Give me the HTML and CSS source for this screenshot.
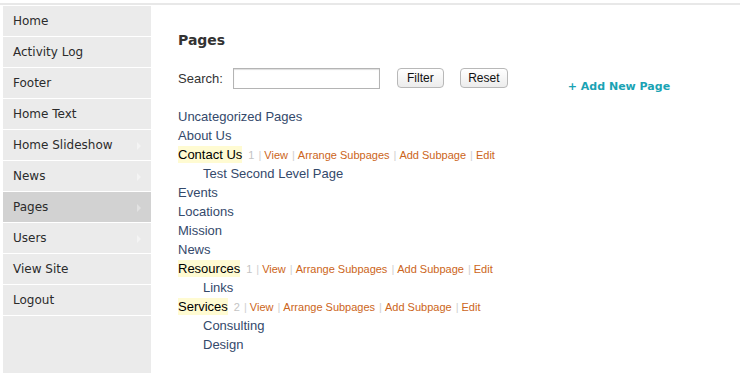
FILE: index.html
```html
<html>

<head>
	<meta charset="utf-8">
	<meta name="viewport" content="width=device-width, initial-scale=1">
	<title>Pages</title>
	<link rel="stylesheet" href="styles.css">
</head>

<body>
	<div class="top-bar"></div>
	<div class="layout">
		<ul class="sidebar">
			<li><a href="#">Home</a></li>
			<li><a href="#">Activity Log</a></li>
			<li><a href="#">Footer</a></li>
			<li><a href="#">Home Text</a></li>
			<li class="has-sub"><a href="#">Home Slideshow</a></li>
			<li class="has-sub"><a href="#">News</a></li>
			<li class="has-sub active"><a href="#">Pages</a></li>
			<li class="has-sub"><a href="#">Users</a></li>
			<li><a href="#">View Site</a></li>
			<li><a href="#">Logout</a></li>
		</ul>

		<div class="main">
			<h2 class="title">Pages</h2>

			<form class="search-row" onsubmit="return false;">
				<label for="search">Search:</label>
				<input type="text" id="search" class="search-input">
				<button class="btn btn-filter">Filter</button>
				<button class="btn btn-reset" type="reset">Reset</button>
				<a href="#" class="add-new">+ Add New Page</a>
			</form>

			<ul class="page-list">
				<li><a href="#">Uncategorized Pages</a></li>
				<li><a href="#">About Us</a></li>
				<li>
					<div class="row"><span class="parent">Contact Us</span><span class="count">1</span><span class="sep">|</span><a class="action" href="#">View</a><span class="sep">|</span><a class="action" href="#">Arrange Subpages</a><span class="sep">|</span><a class="action" href="#">Add Subpage</a><span class="sep">|</span><a class="action" href="#">Edit</a></div>
					<ul class="sub-list">
						<li><a href="#">Test Second Level Page</a></li>
					</ul>
				</li>
				<li><a href="#">Events</a></li>
				<li><a href="#">Locations</a></li>
				<li><a href="#">Mission</a></li>
				<li><a href="#">News</a></li>
				<li>
					<div class="row"><span class="parent">Resources</span><span class="count">1</span><span class="sep">|</span><a class="action" href="#">View</a><span class="sep">|</span><a class="action" href="#">Arrange Subpages</a><span class="sep">|</span><a class="action" href="#">Add Subpage</a><span class="sep">|</span><a class="action" href="#">Edit</a></div>
					<ul class="sub-list">
						<li><a href="#">Links</a></li>
					</ul>
				</li>
				<li>
					<div class="row"><span class="parent">Services</span><span class="count">2</span><span class="sep">|</span><a class="action" href="#">View</a><span class="sep">|</span><a class="action" href="#">Arrange Subpages</a><span class="sep">|</span><a class="action" href="#">Add Subpage</a><span class="sep">|</span><a class="action" href="#">Edit</a></div>
					<ul class="sub-list">
						<li><a href="#">Consulting</a></li>
						<li><a href="#">Design</a></li>
					</ul>
				</li>
			</ul>
		</div>
	</div>
</body>

</html>
```

FILE: styles.css
```css
body {
	margin: 0;
	padding: 0;
	background-color: #fff;
	font-family: "Liberation Sans", Arial, sans-serif;
	color: #333;
}

a {
	text-decoration: none;
}

ul {
	list-style: none;
	margin: 0;
	padding: 0;
}

.top-bar {
	margin-top: 3px;
	height: 2px;
	background-color: #e8e8e8;
}

.layout {
	display: flex;
	margin-top: 1px;
	min-height: 367px;
}

/* sidebar menu */
.sidebar {
	width: 148px;
	margin-left: 3px;
	background-color: #ebebeb;
	font-family: "DejaVu Sans", Verdana, sans-serif;
	font-size: 12px;
}

.sidebar li {
	position: relative;
	height: 30px;
	border-bottom: 1px solid #fff;
}

.sidebar li a {
	display: block;
	padding-left: 10px;
	line-height: 30px;
	color: #2b2b2b;
}

.sidebar li.active {
	background-color: #d2d2d2;
}

.sidebar li.has-sub::after {
	content: "";
	position: absolute;
	top: 12px;
	right: 10px;
	border-top: 4px solid transparent;
	border-bottom: 4px solid transparent;
	border-left: 4px solid #f4f4f4;
}

.sidebar li.active::after {
	border-left-color: #e2e2e2;
}

/* main area */
.main {
	flex: 1;
	padding: 25px 0 0 27px;
}

.title {
	margin: 0;
	font-family: "DejaVu Sans", Verdana, sans-serif;
	font-size: 14px;
	line-height: 18px;
	font-weight: bold;
	color: #333;
}

.search-row {
	display: flex;
	align-items: center;
	height: 22px;
	margin: 18px 0 0 0;
	font-size: 13px;
}

.search-row label {
	margin-right: 10px;
}

.search-input {
	box-sizing: border-box;
	width: 147px;
	height: 21px;
	margin: 0;
	border: 1px solid #b4b4b4;
	box-shadow: inset 0 1px 1px #ddd;
}

.btn {
	box-sizing: border-box;
	height: 20px;
	margin: 0 0 0 16px;
	padding: 0;
	border: 1px solid #b8b8b8;
	border-radius: 4px;
	background: linear-gradient(#fff, #ececec);
	font-family: "Liberation Sans", Arial, sans-serif;
	font-size: 12px;
	color: #111;
}

.btn-filter {
	width: 47px;
	margin-left: 17px;
}

.btn-reset {
	width: 48px;
}

.add-new {
	align-self: flex-start;
	margin: 13px 0 0 60px;
	line-height: 14px;
	font-family: "DejaVu Sans", Verdana, sans-serif;
	font-size: 11px;
	font-weight: bold;
	color: #1aa3b4;
}

/* page tree */
.page-list {
	margin-top: 18px;
	font-size: 13px;
	line-height: 19px;
}

.page-list a {
	color: #34496b;
}

.row {
	height: 19px;
}

.parent {
	background-color: #fffbd2;
	padding: 1px 0;
	color: #000;
}

.count {
	margin-left: 6px;
	font-size: 11px;
	line-height: 1;
	color: #c4c4c4;
}

.sep {
	margin: 0 3px 0 4px;
	font-size: 11px;
	line-height: 1;
	color: #d0d0d0;
}

.page-list a.action {
	font-size: 11px;
	line-height: 1;
	color: #cc6520;
}

.sub-list {
	padding-left: 25px;
}
```
